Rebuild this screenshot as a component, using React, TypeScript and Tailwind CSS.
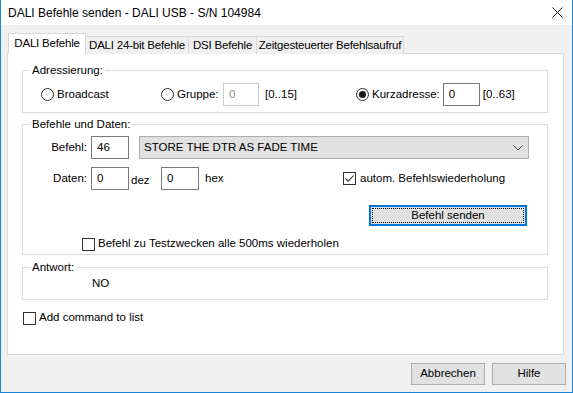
import React from 'react';

// --- small win32-like controls ---
const Radio: React.FC<{ checked?: boolean }> = ({ checked }) => (
    <span className="w-[13px] h-[13px] rounded-full border border-[#333333] bg-white flex items-center justify-center shrink-0">
        {checked && <span className="w-[7px] h-[7px] rounded-full bg-[#1a1a1a]"></span>}
    </span>
);

const Check: React.FC<{ checked?: boolean }> = ({ checked }) => (
    <span className="w-[13px] h-[13px] border border-[#333333] bg-white flex items-center justify-center shrink-0">
        {checked && (
            <svg width="11" height="11" viewBox="0 0 11 11">
                <path d="M1.5 5.5 L4.2 8.2 L9.5 2.5" fill="none" stroke="#333333" strokeWidth="1.1" />
            </svg>
        )}
    </span>
);

const TextBox: React.FC<{ value: string, w: string, disabled?: boolean }> = ({ value, w, disabled }) => (
    <div className={`${w} h-[23px] bg-white border flex items-center pl-[5px] ${disabled ? 'border-[#cccccc] text-[#8c8c8c]' : 'border-[#7a7a7a] text-black'}`}>
        {value}
    </div>
);

const Button: React.FC<{ label: string }> = ({ label }) => (
    <div className="w-[74px] h-[22px] bg-[#e1e1e1] border border-[#adadad] flex items-center justify-center">{label}</div>
);

const GroupBox: React.FC<{ title: string, className?: string, children: React.ReactNode }> = ({ title, className, children }) => (
    <fieldset className={`w-[526px] border border-[#dcdcdc] ${className || ''}`}>
        <legend className="ml-[7px] px-[2px] leading-[16px]">{title}</legend>
        {children}
    </fieldset>
);

export default function App() {
    const tabs = [
        { label: 'DALI 24-bit Befehle', w: 'w-[103px]' },
        { label: 'DSI Befehle', w: 'w-[68px]' },
        { label: 'Zeitgesteuerter Befehlsaufruf', w: 'w-[147px]' },
    ];

    return (
        <div className="w-[573px] h-[393px] bg-[#f0f0f0] border-x border-b border-[#1883d7] flex flex-col text-[11.5px] text-black overflow-hidden whitespace-nowrap" style={{ fontFamily: '"Liberation Sans", Arial, sans-serif' }}>
            {/* Title bar */}
            <div className="h-[25px] bg-white flex items-center justify-between pl-[7px] pr-[9px] shrink-0 text-[12px]">
                <span>DALI Befehle senden - DALI USB - S/N 104984</span>
                <svg width="11" height="11" viewBox="0 0 11 11">
                    <path d="M0.5 0.5 L10.5 10.5 M10.5 0.5 L0.5 10.5" stroke="#111111" strokeWidth="1" />
                </svg>
            </div>

            <div className="pl-[6px] pt-[8px]">
                {/* Tabs */}
                <div className="flex items-end h-[21px] -mb-px relative z-10 tracking-[-0.2px]">
                    <div className="w-[78px] h-[21px] bg-white border border-b-0 border-[#d9d9d9] flex items-center justify-center ml-[1px]">DALI Befehle</div>
                    {tabs.map((t, i) => (
                        <div key={i} className={`${t.w} h-[18px] bg-[#f0f0f0] border border-l-0 border-b-0 border-[#d9d9d9] flex items-center justify-center`}>{t.label}</div>
                    ))}
                </div>

                {/* Tab page */}
                <div className="w-[557px] h-[302px] bg-white border border-[#d9d9d9] pl-[14px] pt-[8px]">
                    <GroupBox title="Adressierung:">
                        <div className="flex items-center h-[23px] mt-[5px] mb-[6px] pl-[18px]">
                            <div className="w-[120px] flex items-center gap-[3px]"><Radio /><span>Broadcast</span></div>
                            <div className="w-[195px] flex items-center">
                                <Radio /><span className="ml-[3px] w-[46px]">Gruppe:</span>
                                <TextBox value="0" w="w-[36px]" disabled />
                                <span className="ml-[6px]">[0..15]</span>
                            </div>
                            <div className="flex items-center">
                                <Radio checked /><span className="ml-[3px] mr-[3px]">Kurzadresse:</span>
                                <TextBox value="0" w="w-[37px]" />
                                <span className="ml-[3px]">[0..63]</span>
                            </div>
                        </div>
                    </GroupBox>

                    <GroupBox title="Befehle und Daten:" className="mt-[3px]">
                        <div className="flex items-center h-[23px] mt-[4px]">
                            <span className="w-[64px] text-right">Befehl:</span>
                            <div className="ml-[4px]"><TextBox value="46" w="w-[38px]" /></div>
                            <div className="ml-[10px] w-[390px] h-[23px] bg-[#e1e1e1] border border-[#adadad] flex items-center justify-between pl-[4px] pr-[5px]">
                                <span>STORE THE DTR AS FADE TIME</span>
                                <svg width="10" height="6" viewBox="0 0 10 6">
                                    <path d="M0.5 0.5 L5 5 L9.5 0.5" fill="none" stroke="#444444" strokeWidth="1" />
                                </svg>
                            </div>
                        </div>
                        <div className="flex items-center h-[23px] mt-[8px]">
                            <span className="w-[64px] text-right">Daten:</span>
                            <div className="ml-[4px]"><TextBox value="0" w="w-[38px]" /></div>
                            <span className="w-[32px] pl-[2px] pt-[5px]">dez</span>
                            <TextBox value="0" w="w-[38px]" />
                            <span className="w-[144px] pl-[6px]">hex</span>
                            <div className="flex items-center gap-[4px]"><Check checked /><span>autom. Befehlswiederholung</span></div>
                        </div>
                        <div className="ml-[346px] mt-[15px] w-[158px] h-[21px] border-2 border-[#0078d7] bg-[#e1e1e1] p-px">
                            <div className="w-full h-full border border-dotted border-black flex items-center justify-center">Befehl senden</div>
                        </div>
                        <div className="flex items-center gap-[3px] ml-[59px] mt-[10px] h-[16px] mb-[2px]">
                            <Check /><span>Befehl zu Testzwecken alle 500ms wiederholen</span>
                        </div>
                    </GroupBox>

                    <GroupBox title="Antwort:" className="mt-[4px]">
                        <div className="ml-[69px] h-[16px] leading-[16px] mb-[8px]">NO</div>
                    </GroupBox>

                    <div className="flex items-center gap-[3px] ml-[1px] mt-[10px] h-[16px]">
                        <Check /><span>Add command to list</span>
                    </div>
                </div>
            </div>

            {/* Footer */}
            <div className="flex justify-end gap-[7px] pr-[6px] mt-[8px]">
                <Button label="Abbrechen" />
                <Button label="Hilfe" />
            </div>
        </div>
    );
}
